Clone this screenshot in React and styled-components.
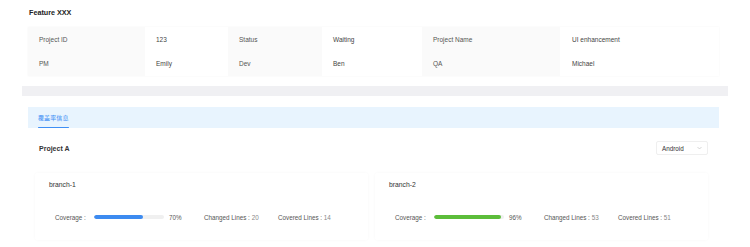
import React from "react";
import styled, { createGlobalStyle } from "styled-components";

const Global = createGlobalStyle`
  html, body { margin: 0; padding: 0; background: #fff; }
  body { font-family: "Liberation Sans", Arial, "Noto Sans CJK SC", sans-serif; color: #333; }
  * { box-sizing: border-box; }
`;

const Page = styled.div`
  width: 750px;
  height: 247px;
  overflow: hidden;
  padding-top: 8px;
`;

const Title = styled.div`
  margin-left: 29px;
  font-size: 7.2px;
  font-weight: 700;
  line-height: 10px;
  color: #222;
`;

const Desc = styled.div`
  margin: 9px 0 0 28px;
  width: 691px;
  display: grid;
  grid-template-columns: 117px 83px 94px 100px 138px 159px;
  grid-auto-rows: 24.5px;
  box-shadow: 0 0 2px rgba(0,0,0,0.04);
`;

const Cell = styled.div`
  display: flex;
  align-items: center;
  padding-left: ${p => (p.$pad ?? 11)}px;
  font-size: 6.5px;
  background: ${p => (p.$label ? "#fafafa" : "#fff")};
  color: ${p => (p.$label ? "#555" : "#444")};
`;

const Strip = styled.div`
  margin: 10px 22px 0 22px;
  height: 10px;
  background: #f0f0f3;
`;

const TabBar = styled.div`
  margin: 11px 0 0 28px;
  width: 691px;
  height: 21px;
  background: #e8f4fe;
  padding-left: 10px;
  display: flex;
  align-items: stretch;
`;

const Tab = styled.div`
  position: relative;
  display: flex;
  align-items: center;
  font-size: 6px;
  letter-spacing: 0.1px;
  color: #3f8ff5;
  &::after {
    content: "";
    position: absolute;
    left: 0;
    right: 0;
    bottom: 0;
    height: 1.5px;
    background: #3f8ff5;
    border-radius: 1px;
  }
`;

const ProjectRow = styled.div`
  margin: 13px 0 0 39px;
  width: 669px;
  height: 14px;
  display: flex;
  align-items: center;
  justify-content: space-between;
`;

const ProjectName = styled.div`
  font-size: 7px;
  font-weight: 600;
  color: #333;
`;

const Select = styled.div`
  width: 52px;
  height: 14px;
  border: 1px solid #efefef;
  border-radius: 2px;
  display: flex;
  align-items: center;
  justify-content: space-between;
  padding: 0 5px 0 5px;
  font-size: 6.3px;
  color: #333;
`;

const Cards = styled.div`
  margin: 18px 0 0 35px;
  display: grid;
  grid-template-columns: 333px 333px;
  column-gap: 7px;
`;

const Card = styled.div`
  height: 67px;
  border-radius: 2px;
  box-shadow: 0 0 3px rgba(0,0,0,0.035);
  padding: 7px 0 0 14px;
`;

const Branch = styled.div`
  font-size: 6.8px;
  color: #333;
  line-height: 10px;
`;

const Stats = styled.div`
  margin: 22px 0 0 6px;
  display: flex;
  align-items: center;
  font-size: 6.3px;
  color: #555;
  height: 10px;
`;

const Label = styled.span`
  width: ${p => p.$w}px;
  white-space: nowrap;
  span { color: #888; }
`;

const Track = styled.div`
  width: 70px;
  height: 3.5px;
  border-radius: 2px;
  background: #f0f0f0;
  overflow: hidden;
  margin-right: 5px;
`;

const Fill = styled.div`
  height: 100%;
  border-radius: 2px;
  background: ${p => p.$color};
`;

const Pct = styled.span`
  width: 35px;
  color: #555;
`;

function Chevron() {
  return (
    <svg width="5" height="4" viewBox="0 0 10 6">
      <path d="M1 1l4 4 4-4" fill="none" stroke="#bbb" strokeWidth="1.2" />
    </svg>
  );
}

const rows = [
  [["Project ID", true], ["123"], ["Status", true], ["Waiting"], ["Project Name", true], ["UI enhancement", false, 12]],
  [["PM", true], ["Emily"], ["Dev", true], ["Ben"], ["QA", true], ["Michael", false, 12]],
];

const branches = [
  { name: "branch-1", pct: 70, color: "#3d8bf0", changed: 20, covered: 14 },
  { name: "branch-2", pct: 96, color: "#5cbd3a", changed: 53, covered: 51 },
];

export default function App() {
  return (
    <>
      <Global />
      <Page>
        <Title>Feature XXX</Title>
        <Desc>
          {rows.flat().map(([t, l, pad], i) => (
            <Cell key={i} $label={l} $pad={pad}>{t}</Cell>
          ))}
        </Desc>
        <Strip />
        <TabBar>
          <Tab>覆盖率信息</Tab>
        </TabBar>
        <ProjectRow>
          <ProjectName>Project A</ProjectName>
          <Select>
            Android
            <Chevron />
          </Select>
        </ProjectRow>
        <Cards>
          {branches.map(b => (
            <Card key={b.name}>
              <Branch>{b.name}</Branch>
              <Stats>
                <Label $w={39}>Coverage :</Label>
                <Track>
                  <Fill $color={b.color} style={{ width: `${b.pct}%` }} />
                </Track>
                <Pct>{b.pct}%</Pct>
                <Label $w={74}>Changed Lines : <span>{b.changed}</span></Label>
                <Label $w={74}>Covered Lines : <span>{b.covered}</span></Label>
              </Stats>
            </Card>
          ))}
        </Cards>
      </Page>
    </>
  );
}
